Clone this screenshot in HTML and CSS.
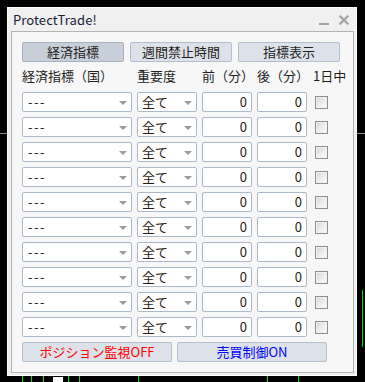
FILE: index.html
```html
<!DOCTYPE html>
<html lang="ja">
<head>
<meta charset="utf-8">
<link rel="stylesheet" href="styles.css">
</head>
<body>
<div class="desk">
  <span class="deco hline hl-left"></span>
  <span class="deco hline hl-right"></span>
  <span class="deco vgreen vg-right"></span>
  <span class="deco bar" style="left:22px"></span>
  <span class="deco bar" style="left:31px"></span>
  <span class="deco bar" style="left:43px"></span>
  <span class="deco wblock"></span>
  <span class="deco bar" style="left:68px"></span>
  <span class="deco bar" style="left:79px"></span>
  <span class="deco bar" style="left:138px"></span>
  <span class="deco bar" style="left:267px"></span>
  <span class="deco bar" style="left:298px"></span>

  <div class="window">
    <div class="titlebar">
      <span class="title">ProtectTrade!</span>
      <div class="wctl">
        <svg class="ic-min" width="10" height="4" viewBox="0 0 10 4"><rect x="0" y="1" width="10" height="2" fill="#a3a3a3"/></svg>
        <svg class="ic-close" width="10" height="10" viewBox="0 0 10 10"><path d="M1.5 1.5 L8.5 8.5 M8.5 1.5 L1.5 8.5" stroke="#a8a8a8" stroke-width="2.4" stroke-linecap="square"/></svg>
      </div>
    </div>
    <div class="panel">
      <div class="tabs">
        <div class="btn active">経済指標</div>
        <div class="btn">週間禁止時間</div>
        <div class="btn">指標表示</div>
      </div>
      <div class="head">
        <span class="c1">経済指標（国）</span>
        <span class="c2">重要度</span>
        <span class="c3">前（分）</span>
        <span class="c4">後（分）</span>
        <span class="c5">1日中</span>
      </div>
      <div class="rows">
        <div class="row"><div class="sel s1"><span class="dash">---</span><i class="arr"></i></div><div class="sel s2"><span>全て</span><i class="arr"></i></div><div class="num">0</div><div class="num">0</div><div class="chk"></div></div>
        <div class="row"><div class="sel s1"><span class="dash">---</span><i class="arr"></i></div><div class="sel s2"><span>全て</span><i class="arr"></i></div><div class="num">0</div><div class="num">0</div><div class="chk"></div></div>
        <div class="row"><div class="sel s1"><span class="dash">---</span><i class="arr"></i></div><div class="sel s2"><span>全て</span><i class="arr"></i></div><div class="num">0</div><div class="num">0</div><div class="chk"></div></div>
        <div class="row"><div class="sel s1"><span class="dash">---</span><i class="arr"></i></div><div class="sel s2"><span>全て</span><i class="arr"></i></div><div class="num">0</div><div class="num">0</div><div class="chk"></div></div>
        <div class="row"><div class="sel s1"><span class="dash">---</span><i class="arr"></i></div><div class="sel s2"><span>全て</span><i class="arr"></i></div><div class="num">0</div><div class="num">0</div><div class="chk"></div></div>
        <div class="row"><div class="sel s1"><span class="dash">---</span><i class="arr"></i></div><div class="sel s2"><span>全て</span><i class="arr"></i></div><div class="num">0</div><div class="num">0</div><div class="chk"></div></div>
        <div class="row"><div class="sel s1"><span class="dash">---</span><i class="arr"></i></div><div class="sel s2"><span>全て</span><i class="arr"></i></div><div class="num">0</div><div class="num">0</div><div class="chk"></div></div>
        <div class="row"><div class="sel s1"><span class="dash">---</span><i class="arr"></i></div><div class="sel s2"><span>全て</span><i class="arr"></i></div><div class="num">0</div><div class="num">0</div><div class="chk"></div></div>
        <div class="row"><div class="sel s1"><span class="dash">---</span><i class="arr"></i></div><div class="sel s2"><span>全て</span><i class="arr"></i></div><div class="num">0</div><div class="num">0</div><div class="chk"></div></div>
        <div class="row"><div class="sel s1"><span class="dash">---</span><i class="arr"></i></div><div class="sel s2"><span>全て</span><i class="arr"></i></div><div class="num">0</div><div class="num">0</div><div class="chk"></div></div>
      </div>
      <div class="actions">
        <div class="btn wide off">ポジション監視OFF</div>
        <div class="btn wide on">売買制御ON</div>
      </div>
    </div>
  </div>
</div>
</body>
</html>
```
FILE: styles.css
```css
html, body {
  margin: 0;
  padding: 0;
  background: #000;
}
.desk {
  position: relative;
  width: 365px;
  height: 382px;
  overflow: hidden;
  padding-top: 7px;
  padding-left: 7px;
  box-sizing: border-box;
  font-family: "Noto Sans CJK JP", "Noto Sans", sans-serif;
  font-size: 13px;
  color: #1f1f1f;
}
.deco { position: absolute; display: block; }
.hline { height: 1px; top: 133px; background: #8c8c8c; }
.hl-left { left: 0; width: 7px; }
.hl-right { left: 357px; width: 8px; }
.vgreen { width: 1px; background: #00e000; }
.vg-right { left: 362px; top: 290px; height: 57px; }
.bar { width: 1px; top: 376px; height: 6px; background: #00e000; }
.wblock { left: 53px; top: 377px; width: 10px; height: 5px; background: #fff; }

.window {
  position: relative;
  width: 350px;
  height: 369px;
  box-sizing: border-box;
  border: 1px solid #fff;
  background: #f0f0f0;
  display: flex;
  flex-direction: column;
}
.titlebar {
  height: 23px;
  display: flex;
  align-items: center;
  justify-content: space-between;
  padding: 0 7px 0 5px;
  flex: none;
}
.title {
  color: #1c1c3a;
  font-size: 13px;
  line-height: 23px;
  letter-spacing: 0.1px;
}
.wctl {
  display: flex;
  align-items: center;
  gap: 10px;
  padding-top: 1px;
}
.ic-min { margin-top: 8px; }
.panel {
  margin: 0 2px 2px 3px;
  flex: 1;
  border: 1px solid #b4b4b4;
  background: #f7f7f7;
  padding: 10px 0 0 10px;
  display: flex;
  flex-direction: column;
}
.tabs {
  display: flex;
  gap: 6px;
}
.btn {
  height: 20px;
  box-sizing: border-box;
  border: 1px solid #b3bfcd;
  border-radius: 2px;
  background: #dde2ea;
  display: flex;
  align-items: center;
  justify-content: center;
  font-size: 13px;
  line-height: 18px;
  color: #1f1f1f;
}
.tabs .btn { width: 102px; }
.btn.active {
  background: #c9cfd9;
  border-color: #a6b2c1;
}
.head {
  height: 20px;
  margin: 4px 0 6px;
  display: flex;
  align-items: center;
  line-height: 20px;
  white-space: nowrap;
}
.head span { display: block; }
.head .c1 { width: 115px; }
.head .c2 { width: 65px; }
.head .c3 { width: 55px; }
.head .c4 { width: 56px; }
.rows {
  display: flex;
  flex-direction: column;
  gap: 5px;
}
.row {
  display: flex;
  align-items: center;
  gap: 5px;
  height: 20px;
}
.sel, .num {
  height: 20px;
  box-sizing: border-box;
  border: 1px solid #aab8c7;
  border-radius: 2px;
  background: #fff;
  display: flex;
  align-items: center;
  line-height: 18px;
}
.sel { justify-content: space-between; padding: 0 4px 0 4px; }
.s1 { width: 110px; }
.s2 { width: 60px; }
.sel span { color: #2a1a10; }
.sel .dash { letter-spacing: 1.5px; padding-left: 1px; }
.arr {
  display: block;
  width: 0;
  height: 0;
  border-left: 4px solid transparent;
  border-right: 4px solid transparent;
  border-top: 4px solid #9c9c9c;
  margin-top: 1px;
}
.num {
  width: 50px;
  justify-content: flex-end;
  padding-right: 4px;
  color: #2a1a10;
}
.chk {
  width: 13px;
  height: 13px;
  box-sizing: border-box;
  margin-left: 3px;
  border: 1px solid #8e8e8e;
  background: linear-gradient(135deg, #d4d4d4 0%, #f0f0f0 60%, #fbfbfb 100%);
  box-shadow: inset 0 0 0 1px #f2f2f2;
}
.actions {
  display: flex;
  gap: 5px;
  margin-top: 5px;
}
.btn.wide { width: 150px; }
.off { color: #ff0000; }
.on { color: #0000ff; }
```
